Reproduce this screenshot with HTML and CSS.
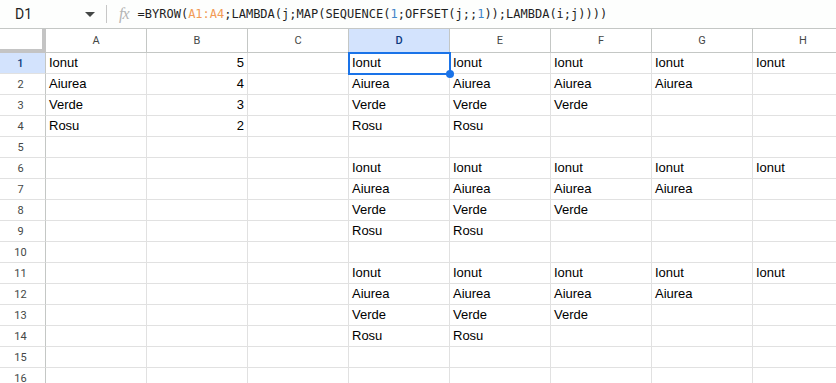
FILE: index.html
```html
<!DOCTYPE html>
<html lang="ro">
<head>
  <meta charset="UTF-8" />
  <title>Sheet</title>
  <link rel="stylesheet" href="styles.css">
</head>
<body>
  <div class="formula-bar">
    <div class="name-box">
      <span class="name-ref">D1</span>
      <span class="name-caret"></span>
    </div>
    <div class="fx-sep"></div>
    <span class="fx">fx</span>
    <div class="formula">=BYROW(<span class="f-range">A1:A4</span>;LAMBDA(j;MAP(SEQUENCE(<span class="f-num">1</span>;OFFSET(j;;<span class="f-num">1</span>));LAMBDA(i;j))))</div>
  </div>

  <div class="grid">
    <div class="corner"></div>
    <div class="col-head">A</div>
    <div class="col-head">B</div>
    <div class="col-head">C</div>
    <div class="col-head active">D</div>
    <div class="col-head">E</div>
    <div class="col-head">F</div>
    <div class="col-head">G</div>
    <div class="col-head">H</div>

    <div class="row-head active">1</div>
    <div class="cell">Ionut</div><div class="cell num">5</div><div class="cell"></div>
    <div class="cell selected">Ionut<span class="handle"></span></div><div class="cell">Ionut</div><div class="cell">Ionut</div><div class="cell">Ionut</div><div class="cell">Ionut</div>

    <div class="row-head">2</div>
    <div class="cell">Aiurea</div><div class="cell num">4</div><div class="cell"></div>
    <div class="cell">Aiurea</div><div class="cell">Aiurea</div><div class="cell">Aiurea</div><div class="cell">Aiurea</div><div class="cell"></div>

    <div class="row-head">3</div>
    <div class="cell">Verde</div><div class="cell num">3</div><div class="cell"></div>
    <div class="cell">Verde</div><div class="cell">Verde</div><div class="cell">Verde</div><div class="cell"></div><div class="cell"></div>

    <div class="row-head">4</div>
    <div class="cell">Rosu</div><div class="cell num">2</div><div class="cell"></div>
    <div class="cell">Rosu</div><div class="cell">Rosu</div><div class="cell"></div><div class="cell"></div><div class="cell"></div>

    <div class="row-head">5</div>
    <div class="cell"></div><div class="cell"></div><div class="cell"></div>
    <div class="cell"></div><div class="cell"></div><div class="cell"></div><div class="cell"></div><div class="cell"></div>

    <div class="row-head">6</div>
    <div class="cell"></div><div class="cell"></div><div class="cell"></div>
    <div class="cell">Ionut</div><div class="cell">Ionut</div><div class="cell">Ionut</div><div class="cell">Ionut</div><div class="cell">Ionut</div>

    <div class="row-head">7</div>
    <div class="cell"></div><div class="cell"></div><div class="cell"></div>
    <div class="cell">Aiurea</div><div class="cell">Aiurea</div><div class="cell">Aiurea</div><div class="cell">Aiurea</div><div class="cell"></div>

    <div class="row-head">8</div>
    <div class="cell"></div><div class="cell"></div><div class="cell"></div>
    <div class="cell">Verde</div><div class="cell">Verde</div><div class="cell">Verde</div><div class="cell"></div><div class="cell"></div>

    <div class="row-head">9</div>
    <div class="cell"></div><div class="cell"></div><div class="cell"></div>
    <div class="cell">Rosu</div><div class="cell">Rosu</div><div class="cell"></div><div class="cell"></div><div class="cell"></div>

    <div class="row-head">10</div>
    <div class="cell"></div><div class="cell"></div><div class="cell"></div>
    <div class="cell"></div><div class="cell"></div><div class="cell"></div><div class="cell"></div><div class="cell"></div>

    <div class="row-head">11</div>
    <div class="cell"></div><div class="cell"></div><div class="cell"></div>
    <div class="cell">Ionut</div><div class="cell">Ionut</div><div class="cell">Ionut</div><div class="cell">Ionut</div><div class="cell">Ionut</div>

    <div class="row-head">12</div>
    <div class="cell"></div><div class="cell"></div><div class="cell"></div>
    <div class="cell">Aiurea</div><div class="cell">Aiurea</div><div class="cell">Aiurea</div><div class="cell">Aiurea</div><div class="cell"></div>

    <div class="row-head">13</div>
    <div class="cell"></div><div class="cell"></div><div class="cell"></div>
    <div class="cell">Verde</div><div class="cell">Verde</div><div class="cell">Verde</div><div class="cell"></div><div class="cell"></div>

    <div class="row-head">14</div>
    <div class="cell"></div><div class="cell"></div><div class="cell"></div>
    <div class="cell">Rosu</div><div class="cell">Rosu</div><div class="cell"></div><div class="cell"></div><div class="cell"></div>

    <div class="row-head">15</div>
    <div class="cell"></div><div class="cell"></div><div class="cell"></div>
    <div class="cell"></div><div class="cell"></div><div class="cell"></div><div class="cell"></div><div class="cell"></div>

    <div class="row-head">16</div>
    <div class="cell"></div><div class="cell"></div><div class="cell"></div>
    <div class="cell"></div><div class="cell"></div><div class="cell"></div><div class="cell"></div><div class="cell"></div>
  </div>
</body>
</html>
```

FILE: styles.css
```css
body {
  margin: 0;
  background: #ffffff;
  font-family: "Liberation Sans", Arial, sans-serif;
  color: #000000;
  width: 836px;
  height: 383px;
  overflow: hidden;
}

.formula-bar {
  display: flex;
  align-items: center;
  height: 28px;
  border-bottom: 1px solid #c4c7c5;
  background: #fdfefd;
}

.name-box {
  display: flex;
  align-items: center;
  justify-content: space-between;
  width: 80px;
  padding-left: 15px;
  padding-right: 11px;
}

.name-ref {
  font-family: Roboto, "Liberation Sans", sans-serif;
  font-size: 14px;
  color: #1f1f1f;
}

.name-caret {
  width: 0;
  height: 0;
  border-left: 5px solid transparent;
  border-right: 5px solid transparent;
  border-top: 5px solid #444746;
  margin-top: 1px;
}

.fx-sep {
  width: 1px;
  height: 18px;
  background: #c7c7c7;
  margin-left: 0;
}

.fx {
  font-family: "Liberation Serif", serif;
  font-style: italic;
  font-size: 16px;
  color: #b4b4b4;
  margin-left: 12px;
  margin-right: 9px;
  letter-spacing: -1px;
}

.formula {
  font-family: "DejaVu Sans Mono", "Liberation Mono", monospace;
  font-size: 12px;
  color: #1f1f1f;
  white-space: nowrap;
}

.f-range {
  color: #f29b56;
}

.f-num {
  color: #3f86c9;
}

.grid {
  display: grid;
  grid-template-columns: 46px repeat(8, 101px);
  grid-auto-rows: 21px;
  grid-template-rows: 24px;
}

.corner {
  background: #ffffff;
  border-right: 4px solid #c4c4c4;
  border-bottom: 4px solid #c4c4c4;
}

.col-head,
.row-head {
  display: flex;
  align-items: center;
  justify-content: center;
  font-family: Roboto, "Liberation Sans", sans-serif;
  font-size: 11px;
  color: #444746;
  background: #ffffff;
}

.col-head {
  border-right: 1px solid #c4c7c5;
  border-bottom: 1px solid #c4c7c5;
}

.row-head {
  border-right: 1px solid #c4c7c5;
  border-bottom: 1px solid #e1e1e1;
  padding-right: 4px;
}

.col-head.active,
.row-head.active {
  background: #d3e3fd;
  color: #0b3a7e;
  font-weight: 500;
}

.cell {
  position: relative;
  box-sizing: border-box;
  border-right: 1px solid #e1e1e1;
  border-bottom: 1px solid #e1e1e1;
  padding: 0 3px;
  font-size: 13px;
  line-height: 20px;
  white-space: nowrap;
}

.cell.num {
  text-align: right;
}

.selected {
  outline: 2px solid #1a73e8;
  outline-offset: -1px;
  z-index: 1;
}

.handle {
  position: absolute;
  right: -5px;
  bottom: -5px;
  width: 8px;
  height: 8px;
  border-radius: 50%;
  background: #1a73e8;
}
```
